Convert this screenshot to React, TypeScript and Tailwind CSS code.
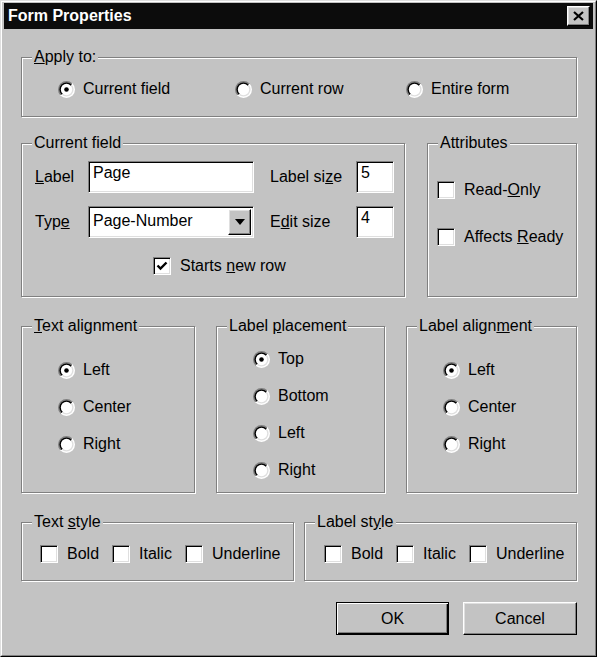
import React from "react";

const sunken =
  "border border-t-[#808080] border-l-[#808080] border-b-white border-r-white shadow-[inset_1px_1px_0_#000,inset_-1px_-1px_0_#dfdfdf]";
const raised =
  "border border-t-white border-l-white border-b-black border-r-black shadow-[inset_-1px_-1px_0_#808080,inset_1px_1px_0_#dfdfdf]";

const Radio = ({ checked = false }: { checked?: boolean }) => (
  <svg width="17" height="17" viewBox="0 0 12 12" className="shrink-0">
    <defs>
      <linearGradient id="rOut" x1="0" y1="0" x2="1" y2="1">
        <stop offset="0.5" stopColor="#808080" />
        <stop offset="0.5" stopColor="#ffffff" />
      </linearGradient>
      <linearGradient id="rIn" x1="0" y1="0" x2="1" y2="1">
        <stop offset="0.5" stopColor="#000000" />
        <stop offset="0.5" stopColor="#dfdfdf" />
      </linearGradient>
    </defs>
    <circle cx="6" cy="6" r="6" fill="url(#rOut)" />
    <circle cx="6" cy="6" r="5" fill="url(#rIn)" />
    <circle cx="6" cy="6" r="4" fill="#ffffff" />
    {checked && <circle cx="6" cy="6" r="1.6" fill="#000" />}
  </svg>
);

const CheckBox = ({ checked = false }: { checked?: boolean }) => (
  <span className={`flex items-center justify-center w-[18px] h-[18px] shrink-0 bg-white ${sunken}`}>
    {checked && (
      <svg width="12" height="12" viewBox="0 0 12 12">
        <path d="M1.5 5.5 L4.5 8.5 L10.5 2.5" stroke="#000" strokeWidth="2.4" fill="none" />
      </svg>
    )}
  </span>
);

const Group = ({
  title,
  className,
  children,
}: {
  title: React.ReactNode;
  className: string;
  children?: React.ReactNode;
}) => (
  <div
    className={`relative border border-[#808080] shadow-[inset_1px_1px_0_#fff,1px_1px_0_#fff] ${className}`}
  >
    <span className="absolute -top-[10px] left-[10px] px-[2px] bg-[#c3c3c3] leading-[18px]">{title}</span>
    {children}
  </div>
);

const RadioItem = ({ label, checked, className = "" }: { label: React.ReactNode; checked?: boolean; className?: string }) => (
  <div className={`flex items-center gap-[8px] h-[18px] ${className}`}>
    <Radio checked={checked} />
    <span>{label}</span>
  </div>
);

const CheckItem = ({ label, checked, className = "" }: { label: React.ReactNode; checked?: boolean; className?: string }) => (
  <div className={`flex items-center gap-[9px] h-[18px] ${className}`}>
    <CheckBox checked={checked} />
    <span>{label}</span>
  </div>
);

const StyleRow = () => (
  <div className="flex pt-[22px]">
    <CheckItem label="Bold" className="w-[72px]" />
    <CheckItem label="Italic" className="w-[73px]" />
    <CheckItem label="Underline" />
  </div>
);

export default function App() {
  return (
    <div className="min-h-screen bg-white font-['Liberation_Sans',Arial,sans-serif] text-[16px] leading-[18px] text-black">
      <div className="w-[597px] h-[657px] bg-[#c3c3c3] border border-t-[#dfdfdf] border-l-[#dfdfdf] border-b-black border-r-black">
        <div className="h-full border border-t-white border-l-white border-b-[#808080] border-r-[#808080] pt-[1px] px-[2px]">
          {/* title bar */}
          <div className="h-[26px] bg-[#0c0c0c] flex items-center justify-between pl-[4px] pr-[3px]">
            <span className="text-white font-bold">Form Properties</span>
            <button className={`w-[23px] h-[20px] bg-[#c3c3c3] flex items-center justify-center ${raised}`}>
              <svg width="11" height="10" viewBox="0 0 11 10">
                <path d="M1 1 L10 9 M10 1 L1 9" stroke="#000" strokeWidth="2.2" />
              </svg>
            </button>
          </div>

          <div className="ml-[17px] w-[556px]">
            <Group
              className="mt-[28px] h-[60px]"
              title={
                <>
                  <u>A</u>pply to:
                </>
              }
            >
              <div className="flex pt-[22px] pl-[36px]">
                <RadioItem label="Current field" checked className="w-[177px]" />
                <RadioItem label="Current row" className="w-[171px]" />
                <RadioItem label="Entire form" />
              </div>
            </Group>

            <div className="flex justify-between mt-[26px]">
              <Group className="w-[384px] h-[154px]" title="Current field">
                <div className="pt-[17px] pl-[13px]">
                  <div className="flex items-center">
                    <span className="w-[53px]">
                      <u>L</u>abel
                    </span>
                    <div className={`w-[166px] h-[32px] bg-white pl-[4px] pt-[2px] ${sunken}`}>Page</div>
                    <span className="ml-[16px] w-[86px]">
                      Label si<u>z</u>e
                    </span>
                    <div className={`w-[38px] h-[32px] bg-white pl-[4px] pt-[2px] ${sunken}`}>5</div>
                  </div>
                  <div className="flex items-center mt-[13px]">
                    <span className="w-[53px]">
                      Typ<u>e</u>
                    </span>
                    <div className={`relative w-[166px] h-[32px] bg-white pl-[4px] pt-[5px] ${sunken}`}>
                      Page-Number
                      <div
                        className={`absolute right-[2px] top-[2px] w-[23px] h-[26px] bg-[#c3c3c3] flex items-center justify-center ${raised}`}
                      >
                        <svg width="10" height="6" viewBox="0 0 10 6">
                          <path d="M0 0 H10 L5 6 Z" fill="#000" />
                        </svg>
                      </div>
                    </div>
                    <span className="ml-[16px] w-[86px]">
                      E<u>d</u>it size
                    </span>
                    <div className={`w-[38px] h-[32px] bg-white pl-[4px] pt-[2px] ${sunken}`}>4</div>
                  </div>
                  <CheckItem
                    checked
                    className="mt-[19px] ml-[118px]"
                    label={
                      <>
                        Starts <u>n</u>ew row
                      </>
                    }
                  />
                </div>
              </Group>

              <Group className="w-[150px] h-[154px]" title="Attributes">
                <div className="pt-[37px] pl-[9px]">
                  <CheckItem
                    label={
                      <>
                        Read-<u>O</u>nly
                      </>
                    }
                  />
                  <CheckItem
                    className="mt-[29px]"
                    label={
                      <>
                        Affects <u>R</u>eady
                      </>
                    }
                  />
                </div>
              </Group>
            </div>

            <div className="flex justify-between mt-[29px]">
              <Group
                className="w-[174px] h-[167px]"
                title={
                  <>
                    <u>T</u>ext alignment
                  </>
                }
              >
                <div className="flex flex-col gap-[19px] pt-[34px] pl-[36px]">
                  <RadioItem label="Left" checked />
                  <RadioItem label="Center" />
                  <RadioItem label="Right" />
                </div>
              </Group>
              <Group
                className="w-[169px] h-[167px]"
                title={
                  <>
                    Label <u>p</u>lacement
                  </>
                }
              >
                <div className="flex flex-col gap-[19px] pt-[23px] pl-[36px]">
                  <RadioItem label="Top" checked />
                  <RadioItem label="Bottom" />
                  <RadioItem label="Left" />
                  <RadioItem label="Right" />
                </div>
              </Group>
              <Group
                className="w-[171px] h-[167px]"
                title={
                  <>
                    Label align<u>m</u>ent
                  </>
                }
              >
                <div className="flex flex-col gap-[19px] pt-[34px] pl-[36px]">
                  <RadioItem label="Left" checked />
                  <RadioItem label="Center" />
                  <RadioItem label="Right" />
                </div>
              </Group>
            </div>

            <div className="flex justify-between mt-[29px]">
              <Group
                className="w-[273px] h-[59px] pl-[18px]"
                title={
                  <>
                    Text <u>s</u>tyle
                  </>
                }
              >
                <StyleRow />
              </Group>
              <Group
                className="w-[273px] h-[59px] pl-[19px]"
                title={
                  <>
                    Label st<u>y</u>le
                  </>
                }
              >
                <StyleRow />
              </Group>
            </div>

            <div className="flex justify-end gap-[14px] mt-[21px]">
              <button
                className="w-[113px] h-[33px] bg-[#c3c3c3] border border-black shadow-[inset_1px_1px_0_#fff,inset_-1px_-1px_0_#000,inset_-2px_-2px_0_#808080]"
              >
                OK
              </button>
              <button className={`w-[114px] h-[33px] bg-[#c3c3c3] ${raised}`}>Cancel</button>
            </div>
          </div>
        </div>
      </div>
    </div>
  );
}
